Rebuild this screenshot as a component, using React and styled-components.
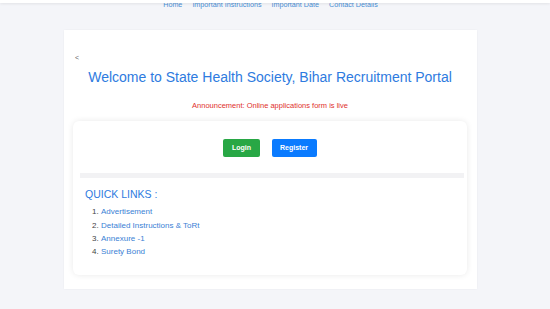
import React from "react";
import styled, { createGlobalStyle } from "styled-components";

const Global = createGlobalStyle`
  html, body { margin: 0; padding: 0; }
  body {
    background: #f4f5f9;
    font-family: "Liberation Sans", Arial, sans-serif;
    width: 550px;
    height: 309px;
    overflow: hidden;
  }
`;

const TopStrip = styled.div`
  position: fixed;
  top: 0;
  left: 0;
  right: 0;
  height: 3px;
  background: #ffffff;
  box-shadow: 0 1px 3px rgba(0, 0, 0, 0.08);
  z-index: 2;
`;

const Page = styled.div`
  width: 541px;
  display: flex;
  flex-direction: column;
  align-items: center;
`;

const Nav = styled.nav`
  display: flex;
  gap: 10px;
  height: 9px;
  font-size: 7.2px;
  line-height: 9px;
`;

const NavLink = styled.a`
  color: #4a8fd6;
  text-decoration: none;
  white-space: nowrap;
`;

const MainCard = styled.main`
  margin-top: 21px;
  width: 413px;
  box-sizing: border-box;
  background: #ffffff;
  box-shadow: 0 0 2px rgba(0, 0, 0, 0.05);
  padding: 23px 10px 14px 9px;
  display: flex;
  flex-direction: column;
`;

const Back = styled.a`
  font-size: 7px;
  line-height: 9px;
  height: 9px;
  color: #666;
  padding-left: 2px;
  text-decoration: none;
`;

const Title = styled.h1`
  margin: 7px 0 0;
  font-size: 14px;
  line-height: 1.2;
  font-weight: 400;
  color: #2e7be0;
  text-align: center;
  white-space: nowrap;
`;

const Announcement = styled.p`
  margin: 15px 0 0;
  font-size: 7.5px;
  line-height: 9px;
  color: #e0302e;
  text-align: center;
`;

const InnerCard = styled.section`
  margin-top: 11px;
  background: #ffffff;
  border-radius: 6px;
  box-shadow: 0 0 6px rgba(0, 0, 0, 0.09);
  padding: 18px 0 16px;
  display: flex;
  flex-direction: column;
`;

const ButtonRow = styled.div`
  display: flex;
  justify-content: center;
  gap: 12px;
`;

const Button = styled.button`
  height: 18px;
  padding: 0 8.5px;
  border: none;
  border-radius: 2px;
  font-family: "Liberation Sans", Arial, sans-serif;
  font-size: 7px;
  font-weight: 700;
  color: #ffffff;
  background: ${(p) => (p.$variant === "green" ? "#28a745" : "#0a7bff")};
  cursor: pointer;
`;

const Divider = styled.div`
  margin: 16px 3px 0 7px;
  height: 5px;
  background: #f2f2f4;
`;

const LinksBlock = styled.div`
  padding: 0 12px;
`;

const Heading = styled.h2`
  margin: 10px 0 0;
  font-size: 10.5px;
  line-height: 1.2;
  font-weight: 400;
  color: #2e7be0;
`;

const List = styled.ol`
  margin: 5px 0 0;
  padding-left: 16px;
  font-size: 8px;
  line-height: 13.33px;
  color: #444;
`;

const Item = styled.li``;

const Link = styled.a`
  color: #3a7fd5;
  text-decoration: none;
`;

const navItems = ["Home", "Important Instructions", "Important Date", "Contact Details"];
const quickLinks = ["Advertisement", "Detailed Instructions & ToRt", "Annexure -1", "Surety Bond"];

export default function App() {
  return (
    <>
      <Global />
      <TopStrip />
      <Page>
        <Nav>
          {navItems.map((n) => (
            <NavLink key={n} href="#">{n}</NavLink>
          ))}
        </Nav>
        <MainCard>
          <Back href="#">&lt;</Back>
          <Title>Welcome to State Health Society, Bihar Recruitment Portal</Title>
          <Announcement>Announcement: Online applications form is live</Announcement>
          <InnerCard>
            <ButtonRow>
              <Button $variant="green">Login</Button>
              <Button $variant="blue">Register</Button>
            </ButtonRow>
            <Divider />
            <LinksBlock>
              <Heading>QUICK LINKS :</Heading>
              <List>
                {quickLinks.map((l) => (
                  <Item key={l}>
                    <Link href="#">{l}</Link>
                  </Item>
                ))}
              </List>
            </LinksBlock>
          </InnerCard>
        </MainCard>
      </Page>
    </>
  );
}
